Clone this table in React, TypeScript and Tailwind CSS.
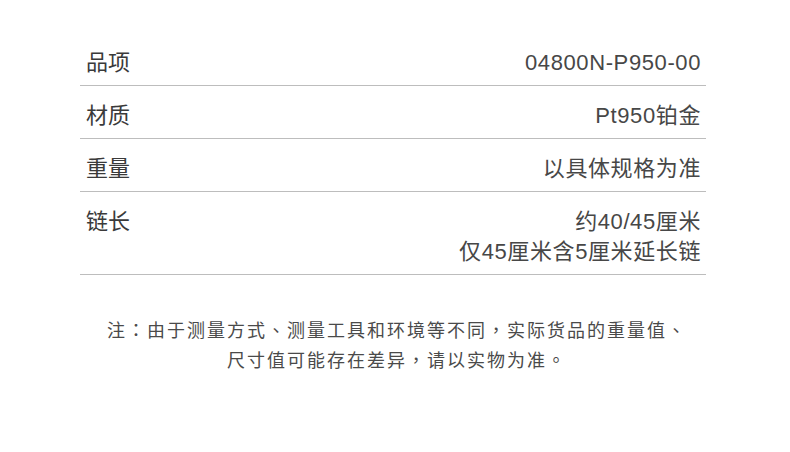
const rows: { label: string; values: string[] }[] = [
  { label: "品项", values: ["04800N-P950-00"] },
  { label: "材质", values: ["Pt950铂金"] },
  { label: "重量", values: ["以具体规格为准"] },
  { label: "链长", values: ["约40/45厘米", "仅45厘米含5厘米延长链"] },
];

const noteLines = [
  "注：由于测量方式、测量工具和环境等不同，实际货品的重量值、",
  "尺寸值可能存在差异，请以实物为准。",
];

// full-width punctuation sits centred in the source, as in the TC font
function Note({ text }: { text: string }) {
  return (
    <div className="h-[30px]">
      {text.split(/([：、，。])/).map((part, i) =>
        i % 2 === 1 ? (
          <span key={i} className="font-['Noto_Sans_CJK_TC'] leading-none">
            {part}
          </span>
        ) : (
          <span key={i}>{part}</span>
        )
      )}
    </div>
  );
}

export default function App() {
  return (
    <div
      className="h-[452px] w-[790px] bg-white pt-[33px]"
      style={{ fontFamily: '"Liberation Sans", "Noto Sans CJK SC", sans-serif' }}
    >
      {/* spec table */}
      <div className="mx-[80px] w-[626px]">
        {rows.map((row) => (
          <div
            key={row.label}
            className="flex justify-between border-b border-[#bdbdbd] pb-[7px] pl-[6px] pr-[5px] pt-[15px] text-[22px] leading-[30px]"
          >
            <div className="text-[#3a3a3a]">{row.label}</div>
            <div className="text-right tracking-[0.6px] text-[#474747]">
              {row.values.map((v) => (
                <div key={v}>{v}</div>
              ))}
            </div>
          </div>
        ))}
      </div>

      {/* note */}
      <div className="mt-[41px] pl-[4px] text-center text-[18px] leading-[30px] tracking-[2px] text-[#4a4a4a]">
        {noteLines.map((line) => (
          <Note key={line} text={line} />
        ))}
      </div>
    </div>
  );
}
